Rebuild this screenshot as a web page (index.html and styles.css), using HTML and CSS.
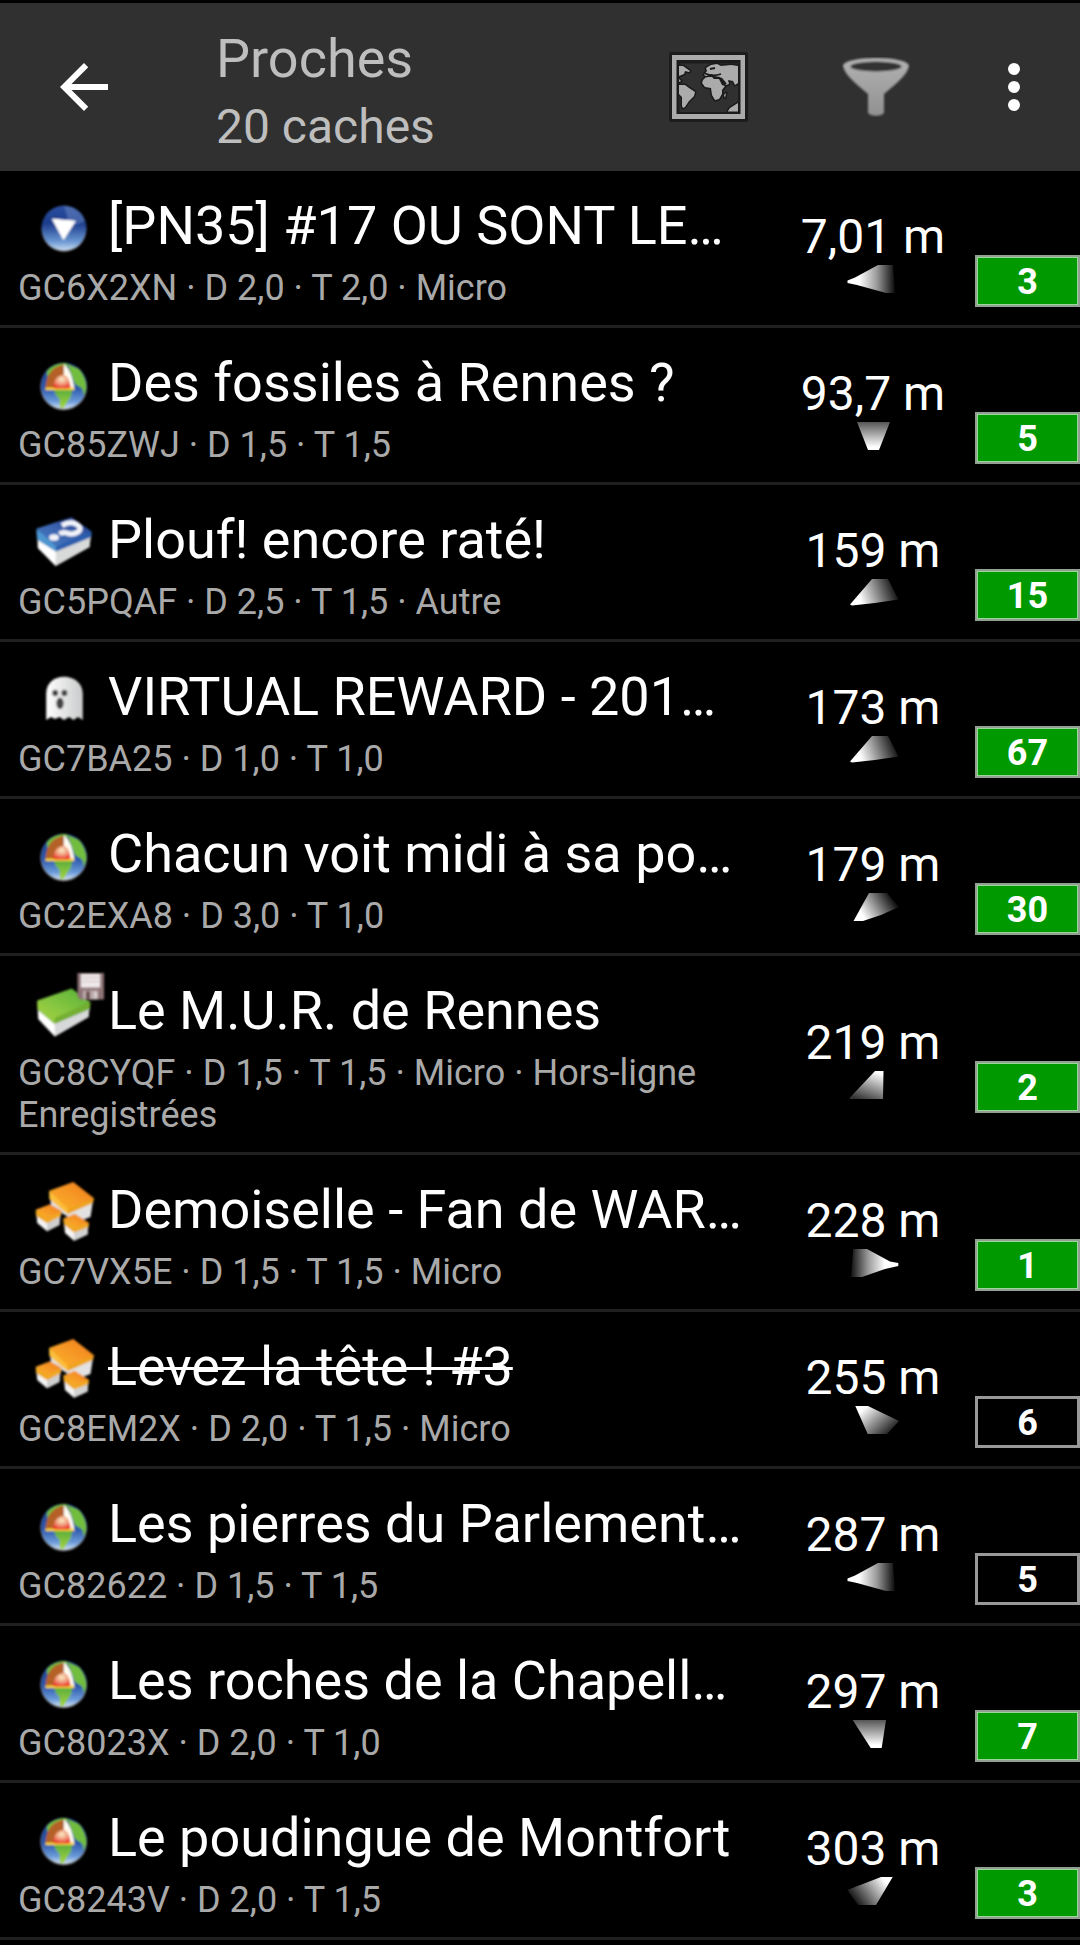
FILE: index.html
```html
<!DOCTYPE html>
<html lang="fr">
<head>
<meta charset="utf-8">
<title>Proches</title>
<link rel="stylesheet" href="styles.css">
</head>
<body>
<svg class="defs" width="0" height="0" aria-hidden="true">
  <defs>
    <linearGradient id="blue" x1="0" y1="0" x2="0" y2="1"><stop offset="0" stop-color="#2d4f9f"/><stop offset=".4" stop-color="#1c3c8c"/><stop offset=".8" stop-color="#6a97d2"/><stop offset="1" stop-color="#c8dcf0"/></linearGradient>
    <linearGradient id="ocean" x1="0" y1="0" x2="0" y2="1"><stop offset="0" stop-color="#1d3f86"/><stop offset=".55" stop-color="#2c58ab"/><stop offset=".85" stop-color="#6f9edb"/><stop offset="1" stop-color="#dbe8f6"/></linearGradient>
    <linearGradient id="land" x1="0" y1="0" x2="0" y2="1"><stop offset="0" stop-color="#5cae3c"/><stop offset="1" stop-color="#a5d43c"/></linearGradient>
    <radialGradient id="core" cx=".5" cy=".35" r=".7"><stop offset="0" stop-color="#f8f0c8"/><stop offset=".5" stop-color="#f2987a"/><stop offset="1" stop-color="#e8261c"/></radialGradient>
    <linearGradient id="lidBlue" x1="0" y1="1" x2="1" y2="0"><stop offset="0" stop-color="#4a7fc4"/><stop offset=".5" stop-color="#3a62ae"/><stop offset="1" stop-color="#1c3c90"/></linearGradient>
    <linearGradient id="lidGreen" x1="0" y1="1" x2="1" y2="0"><stop offset="0" stop-color="#a4d344"/><stop offset="1" stop-color="#55b038"/></linearGradient>
    <linearGradient id="lidOrange" x1="0" y1="1" x2="1" y2="0"><stop offset="0" stop-color="#fcb42c"/><stop offset="1" stop-color="#f07c1e"/></linearGradient>
    <linearGradient id="white" x1="0" y1="0" x2="1" y2="0"><stop offset="0" stop-color="#fff"/><stop offset="1" stop-color="#c9cacb"/></linearGradient>
    <linearGradient id="metal" x1="0" y1="0" x2="0" y2="1"><stop offset="0" stop-color="#b2b2b2"/><stop offset="1" stop-color="#919191"/></linearGradient>
    <filter id="soft" x="-10%" y="-10%" width="120%" height="120%"><feGaussianBlur stdDeviation=".9"/></filter>

    <symbol id="wherigo" viewBox="0 0 72 72" overflow="visible">
      <g filter="url(#soft)"><circle cx="30" cy="46.5" r="22.3" fill="#777"/><circle cx="30" cy="45" r="22.5" fill="url(#blue)"/>
      <path d="M30 23Q46 24 51 38Q40 44 34 40Q34 34 30 23" fill="#8aa5d8" opacity=".35"/>
      <path d="M18.5 36.2L41.2 38.2L29.5 56.5Z" fill="#fff" stroke="#fff" stroke-width="1"/></g>
    </symbol>
    <symbol id="earth" viewBox="0 0 72 72" overflow="visible">
      <g filter="url(#soft)"><circle cx="29.7" cy="46.8" r="23.4" fill="#777"/><circle cx="29.7" cy="45.8" r="23" fill="url(#ocean)"/>
      <path d="M13 31Q20 23 31 23L45 29Q52 37 52.5 48L50 56Q49 48 46 47L41 44L34 26Q20 27 13 37Z" fill="#72bd3d"/>
      <path d="M20 50H38Q38 57 34 61L29.5 68L26 67.5L25.5 59Q21 55 20 50Z" fill="url(#land)"/>
      <path d="M29.7 24Q38 30 40.5 50L29 49.5Z" fill="#fffdf0"/>
      <path d="M11.5 49Q12 28 29.7 24.5V40L24 49.5Z" fill="#b56028"/>
      <path d="M11.5 48.8H40" stroke="#f8d43c" stroke-width="2.5" fill="none"/>
      <path d="M19 48Q20 36 29.5 34.5Q36 37 36.5 48Q28 49 19 48Z" fill="url(#core)"/></g>
    </symbol>
    <symbol id="mystery" viewBox="0 0 72 72" overflow="visible">
      <g filter="url(#soft)"><path d="M3.5 41L22 53L56.5 39L55.5 50L21.5 69L3.8 51Z" fill="#fff"/>
      <path d="M21.8 52L57 38L55.5 50L21.5 69Z" fill="#d8d9d9"/>
      <path d="M2.5 32L22 47L57.5 34.5V40L22 54.5L3 42.5Z" fill="#2a5fae"/>
      <path d="M2.5 32L22 47L22 54.5L3 42.5Z" fill="#4e97d0"/>
      <path d="M2.5 31.5L37.6 20.2L57.5 34.5L22 49.5Z" fill="url(#lidBlue)"/>
      <path d="M28 28.5Q36 24 42 27Q49 31 44 35Q38 38.5 33 36Q29 34.5 25.5 37" fill="none" stroke="#f2f4fa" stroke-width="5"/><ellipse cx="20" cy="40.5" rx="4.8" ry="3.2" fill="#f2f4fa"/></g>
    </symbol>
    <symbol id="traditional" viewBox="0 0 72 72" overflow="visible">
      <g filter="url(#soft)"><path d="M3.7 42L21 54L55.5 40L54.5 49L20.7 68.5L4.2 51Z" fill="#fff"/>
      <path d="M20.7 54L55.5 40L54.5 49L20.7 68.5Z" fill="#d7d8d9"/>
      <path d="M3.3 32.5L21 48L56.5 34L56 41L20.5 56L3.5 41.5Z" fill="#75af32"/>
      <path d="M3.3 32.5L21 48L20.5 56L3.5 41.5Z" fill="#95cb40"/>
      <path d="M3.3 32.5L37.6 20.4L56.5 34L20.5 50Z" fill="url(#lidGreen)"/></g>
    </symbol>
    <symbol id="floppy" viewBox="0 0 28 28" overflow="visible">
      <g filter="url(#soft)"><path d="M.5 .5H27V27H3L.5 24Z" fill="#907577"/><path d="M4 1.5H23V15H4Z" fill="#f0e9ea"/><path d="M5 5H22M5 9H22" stroke="#d5cccd" stroke-width="1.3"/>
      <path d="M6 18H21V27H6Z" fill="#b9a9aa"/><path d="M9 19H13V27H9Z" fill="#69494c"/><path d="M17 19H20V26H17Z" fill="#d9cfd0"/></g>
    </symbol>
    <symbol id="multi" viewBox="0 0 72 72" overflow="visible">
      <g filter="url(#soft)"><path d="M16 30L34 44L59 34L56.5 50L46 54L34 50L17 39Z" fill="#e2e2e2"/>
      <path d="M15.3 23.7L33.5 40L60 31.5L59 36L34 47L15.5 32Z" fill="#eea41f"/><path d="M15.3 23.7L33.5 40V47L15.5 32Z" fill="#fcbf3a"/><path d="M15.3 23.7L39.3 15L60.3 31.5L33.5 42Z" fill="url(#lidOrange)"/>
      <path d="M2.4 47L12 54L26 48L25.2 58L13 64.3L3.2 56Z" fill="#f4f4f4"/><path d="M13 55L26.5 48L25.5 58L13 64.3Z" fill="#cfcfcf"/>
      <path d="M1.7 42.7L13.3 50L27.6 43.7L27 49L13 56.3L2 49Z" fill="#f0a820"/><path d="M1.7 42.7L16 37.2L27.6 43.7L13.3 52Z" fill="url(#lidOrange)"/>
      <path d="M30 56L40 63L54.2 58L53.5 67.5L40 73.7L31 66Z" fill="#f4f4f4"/><path d="M40 63L54.5 58L53.5 67.5L40 73.7Z" fill="#d2d2d2"/>
      <path d="M29.2 51.5L40 59L55 55.7L54.5 60L40 65.5L29.8 57.5Z" fill="#f0a820"/><path d="M29.2 51.5L40.7 46.8L55 55.7L40 61Z" fill="url(#lidOrange)"/></g>
    </symbol>
    <symbol id="ghost" viewBox="0 0 72 72" overflow="visible">
      <g filter="url(#soft)"><path d="M12.2 66V40C12.2 29 20 22.8 30 22.8S48.8 29 48.8 40V66L44 63L39.5 66L35 63L30 66L25.5 63L21 65L17 63Z" fill="url(#white)"/>
      <ellipse cx="21.2" cy="39" rx="3" ry="3.3" fill="#444"/><ellipse cx="30.4" cy="39" rx="3" ry="3.3" fill="#444"/><ellipse cx="26" cy="49.3" rx="3.7" ry="5.8" fill="#444"/></g>
    </symbol>

    <linearGradient id="gLeft" gradientUnits="userSpaceOnUse" x1="14" y1="0" x2="50" y2="0"><stop offset="0" stop-color="#fff"/><stop offset=".5" stop-color="#999"/><stop offset="1" stop-color="#0a0a0a"/></linearGradient>
    <linearGradient id="gDown" gradientUnits="userSpaceOnUse" x1="0" y1="25" x2="0" y2="-2"><stop offset="0" stop-color="#fff"/><stop offset="1" stop-color="#484848"/></linearGradient>
    <linearGradient id="gLow" gradientUnits="userSpaceOnUse" x1="15" y1="20" x2="50" y2="8"><stop offset="0" stop-color="#fff"/><stop offset="1" stop-color="#111"/></linearGradient>
    <linearGradient id="gLow2" gradientUnits="userSpaceOnUse" x1="18" y1="23" x2="47" y2="5"><stop offset="0" stop-color="#fff"/><stop offset="1" stop-color="#111"/></linearGradient>
    <linearGradient id="gUp" gradientUnits="userSpaceOnUse" x1="35" y1="2" x2="24" y2="32"><stop offset="0" stop-color="#fff"/><stop offset="1" stop-color="#333"/></linearGradient>
    <linearGradient id="gRight" gradientUnits="userSpaceOnUse" x1="40" y1="0" x2="6" y2="0"><stop offset="0" stop-color="#fff"/><stop offset=".5" stop-color="#999"/><stop offset="1" stop-color="#111"/></linearGradient>
    <linearGradient id="gUpLeft" gradientUnits="userSpaceOnUse" x1="18" y1="3" x2="42" y2="29"><stop offset="0" stop-color="#fff"/><stop offset="1" stop-color="#222"/></linearGradient>
    <linearGradient id="gUpRight" gradientUnits="userSpaceOnUse" x1="40" y1="4" x2="10" y2="26"><stop offset="0" stop-color="#fff"/><stop offset="1" stop-color="#111"/></linearGradient>
    <symbol id="a-left" viewBox="0 0 56 28"><path d="M2.5 15.5L10 12.5L33 0H48L50 28H41L12 20L2.5 18Z" fill="url(#gLeft)"/></symbol>
    <symbol id="a-down" viewBox="0 0 56 28"><path d="M12 0H45L34 28H23Z" fill="url(#gDown)"/></symbol>
    <symbol id="a-low" viewBox="0 0 56 28"><path d="M5 25.5L27 0H43L53.5 20.5L30 24L7 26.5Z" fill="url(#gLow)"/></symbol>
    <symbol id="a-low2" viewBox="0 0 56 28"><path d="M8.5 28L24 0H42L54 14L36 22L18 28Z" fill="url(#gLow2)"/></symbol>
    <symbol id="a-up" viewBox="0 0 56 28"><path d="M38.5 0H30L5 26.5V28H38Z" fill="url(#gUp)"/></symbol>
    <symbol id="a-right" viewBox="0 0 56 28"><path d="M8.3 0H22L45 12.5L53.3 14V17L40 20L17 28H6Z" fill="url(#gRight)"/></symbol>
    <symbol id="a-upleft" viewBox="0 0 56 28"><path d="M10.3 0H23L54 15L42 28H22.7Z" fill="url(#gUpLeft)"/></symbol>
    <symbol id="a-down2" viewBox="0 0 56 28"><path d="M7.7 0H41L36.7 28H25.7Z" fill="url(#gDown)"/></symbol>
    <symbol id="a-upright" viewBox="0 0 56 28"><path d="M47.7 0H36L2.3 13L13 28H31Z" fill="url(#gUpRight)"/></symbol>
  </defs>
</svg>

<header class="bar">
  <svg class="bar-back" viewBox="0 0 24 24"><path d="M20 11H7.83l5.59-5.59L12 4l-8 8 8 8 1.41-1.41L7.83 13H20v-2z" fill="#fff"/></svg>
  <div class="bar-titles">
    <h1 class="bar-title">Proches</h1>
    <div class="bar-sub">20 caches</div>
  </div>
  <svg class="bar-map" viewBox="0 0 80 72">
    <rect x="0" y="1" width="79" height="70" rx="2" fill="#1c1c1c"/>
    <rect x="3" y="4" width="73" height="64" fill="#ababab"/>
    <rect x="7.5" y="9" width="64" height="54" fill="#1c1c1c"/>
    <rect x="10.5" y="12.5" width="58.5" height="48.5" fill="#303030"/>
    <g fill="#ababab" stroke="#1a1a1a" stroke-width="3" stroke-linejoin="round" paint-order="stroke">
      <path d="M10 15L14 15L21 20L20 21L16 20L15 23L10 25Z"/>
      <path d="M10 28L12 30L10 31Z"/>
      <path d="M10 34L16 34L20 37L26 41L25 45L20 50L16 56L14 57L13 55L13 46L10 43Z"/>
      <path d="M34 29L37 26H43L45 28L50 28L53 34L56 35L53 39L53 43L50 48L46 49L43 44L42 37L36 36L33 32Z"/>
      <path d="M35 24L38 20L37 17L42 14L48 13L52 15L62 14L69 15V32L66 34L64 30L59 29L60 33L57 34L53 28L51 26L45 25L43 23L37 25Z"/>
      <path d="M55 44L57 42L56 47Z"/><path d="M59 60L61 57L69 52V60.5H59Z"/>
    </g>
    <path d="M36 22.5Q44 26 52 23M41 18L46 17M52 27L57 33" stroke="#1c1c1c" stroke-width="1.8" fill="none"/>
  </svg>
  <svg class="bar-filter" viewBox="0 0 68 60">
    <g filter="url(#soft)"><path d="M1 9C1 4 16 1 34 1S67 4 67 9C65 18 55 26 42 37V55C42 60 26 60 26 55V37C13 26 3 18 1 9Z" fill="url(#metal)"/>
    <ellipse cx="34" cy="9.5" rx="25.5" ry="5" fill="#303030"/></g>
  </svg>
  <svg class="bar-more" viewBox="0 0 24 24"><g fill="#fff"><circle cx="12" cy="6" r="2"/><circle cx="12" cy="12" r="2"/><circle cx="12" cy="18" r="2"/></g></svg>
</header>

<main class="list">
  <article class="row">
    <div class="info"><div class="head"><svg class="icon"><use href="#wherigo"/></svg><h2 class="name">[PN35] #17 OU SONT LE…</h2></div><p class="meta">GC6X2XN · D 2,0 · T 2,0 · Micro</p></div>
    <div class="where"><span class="dist">7,01 m</span><svg class="arrow"><use href="#a-left"/></svg></div><span class="badge on">3</span>
  </article>
  <article class="row">
    <div class="info"><div class="head"><svg class="icon"><use href="#earth"/></svg><h2 class="name">Des fossiles à Rennes ?</h2></div><p class="meta">GC85ZWJ · D 1,5 · T 1,5</p></div>
    <div class="where"><span class="dist">93,7 m</span><svg class="arrow"><use href="#a-down"/></svg></div><span class="badge on">5</span>
  </article>
  <article class="row">
    <div class="info"><div class="head"><svg class="icon"><use href="#mystery"/></svg><h2 class="name">Plouf! encore raté!</h2></div><p class="meta">GC5PQAF · D 2,5 · T 1,5 · Autre</p></div>
    <div class="where"><span class="dist">159 m</span><svg class="arrow"><use href="#a-low"/></svg></div><span class="badge on">15</span>
  </article>
  <article class="row">
    <div class="info"><div class="head"><svg class="icon"><use href="#ghost"/></svg><h2 class="name">VIRTUAL REWARD - 201…</h2></div><p class="meta">GC7BA25 · D 1,0 · T 1,0</p></div>
    <div class="where"><span class="dist">173 m</span><svg class="arrow"><use href="#a-low"/></svg></div><span class="badge on">67</span>
  </article>
  <article class="row">
    <div class="info"><div class="head"><svg class="icon"><use href="#earth"/></svg><h2 class="name">Chacun voit midi à sa po…</h2></div><p class="meta">GC2EXA8 · D 3,0 · T 1,0</p></div>
    <div class="where"><span class="dist">179 m</span><svg class="arrow"><use href="#a-low2"/></svg></div><span class="badge on">30</span>
  </article>
  <article class="row">
    <div class="info"><div class="head"><svg class="icon"><use href="#traditional"/><use href="#floppy" x="43" y="4.5" width="28" height="28"/></svg><h2 class="name">Le M.U.R. de Rennes</h2></div><p class="meta">GC8CYQF · D 1,5 · T 1,5 · Micro · Hors-ligne<br>Enregistrées</p></div>
    <div class="where"><span class="dist">219 m</span><svg class="arrow"><use href="#a-up"/></svg></div><span class="badge on">2</span>
  </article>
  <article class="row">
    <div class="info"><div class="head"><svg class="icon"><use href="#multi"/></svg><h2 class="name">Demoiselle - Fan de WAR…</h2></div><p class="meta">GC7VX5E · D 1,5 · T 1,5 · Micro</p></div>
    <div class="where"><span class="dist">228 m</span><svg class="arrow"><use href="#a-right"/></svg></div><span class="badge on">1</span>
  </article>
  <article class="row">
    <div class="info"><div class="head"><svg class="icon"><use href="#multi"/></svg><h2 class="name disabled">Levez la tête ! #3</h2></div><p class="meta">GC8EM2X · D 2,0 · T 1,5 · Micro</p></div>
    <div class="where"><span class="dist">255 m</span><svg class="arrow"><use href="#a-upleft"/></svg></div><span class="badge">6</span>
  </article>
  <article class="row">
    <div class="info"><div class="head"><svg class="icon"><use href="#earth"/></svg><h2 class="name">Les pierres du Parlement…</h2></div><p class="meta">GC82622 · D 1,5 · T 1,5</p></div>
    <div class="where"><span class="dist">287 m</span><svg class="arrow"><use href="#a-left"/></svg></div><span class="badge">5</span>
  </article>
  <article class="row">
    <div class="info"><div class="head"><svg class="icon"><use href="#earth"/></svg><h2 class="name">Les roches de la Chapell…</h2></div><p class="meta">GC8023X · D 2,0 · T 1,0</p></div>
    <div class="where"><span class="dist">297 m</span><svg class="arrow"><use href="#a-down2"/></svg></div><span class="badge on">7</span>
  </article>
  <article class="row">
    <div class="info"><div class="head"><svg class="icon"><use href="#earth"/></svg><h2 class="name">Le poudingue de Montfort</h2></div><p class="meta">GC8243V · D 2,0 · T 1,5</p></div>
    <div class="where"><span class="dist">303 m</span><svg class="arrow"><use href="#a-upright"/></svg></div><span class="badge on">3</span>
  </article>
</main>
</body>
</html>
```
FILE: styles.css
```css
* { box-sizing: border-box; }
body {
  margin: 0;
  background: #000;
  color: #fff;
  font-family: Roboto, "Liberation Sans", sans-serif;
  overflow: hidden;
}
svg { display: block; flex: none; }
.defs { position: absolute; }
h1, h2, p { margin: 0; font-weight: 400; }

.bar {
  display: flex;
  align-items: center;
  height: 171px;
  border-top: 3px solid #000;
  background: #303030;
  color: #bebebe;
}
.bar-back { width: 72px; height: 72px; margin-left: 48px; }
.bar-titles { width: 453px; margin-left: 96px; padding-top: 16px; }
.bar-title { font-size: 54px; line-height: 64px; }
.bar-sub { font-size: 48px; line-height: 72px; }
.bar-map { width: 80px; height: 72px; }
.bar-filter { width: 68px; height: 60px; margin-left: 93px; }
.bar-more { width: 72px; height: 72px; margin-left: 68px; }

.row {
  display: flex;
  align-items: center;
  border-bottom: 3px solid #1f1f1f;
}
.info { width: 771px; padding: 12px 0 16px 18px; }
.head { display: flex; height: 84px; padding-left: 16px; }
.icon { width: 72px; height: 72px; overflow: visible; }
.name {
  margin-left: 2px;
  padding-top: 7px;
  font-size: 54px;
  line-height: 72px;
  white-space: nowrap;
}
.disabled { text-decoration: line-through; text-decoration-thickness: 3px; }
.meta { font-size: 36px; line-height: 42px; color: #a9a9a9; }

.where {
  display: flex;
  flex-direction: column;
  align-items: center;
  width: 204px;
  padding-top: 6px;
}
.dist { font-size: 48px; line-height: 56px; white-space: nowrap; }
.arrow { width: 56px; height: 28px; }

.badge {
  width: 105px;
  height: 52px;
  margin-top: 66px;
  border: 3px solid #999;
  font-size: 36px;
  font-weight: 700;
  line-height: 48px;
  text-align: center;
}
.badge.on {
  border: 2px solid #939f93;
  box-shadow: inset 0 0 0 1px #99d699;
  background: #090;
  line-height: 50px;
}
```
